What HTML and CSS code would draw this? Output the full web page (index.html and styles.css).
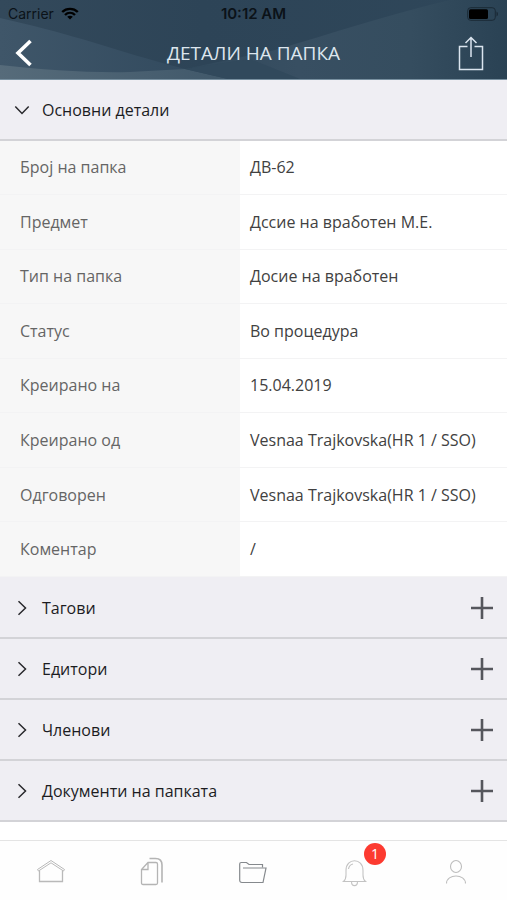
FILE: index.html
```html
<!DOCTYPE html>
<html lang="mk">
<head>
<meta charset="utf-8">
<meta name="viewport" content="width=device-width, initial-scale=1">
<title>Детали на папка</title>
<link rel="stylesheet" href="styles.css">
</head>
<body>
<header class="top">
  <svg class="top-art" viewBox="0 0 507 79" preserveAspectRatio="none" aria-hidden="true">
    <defs>
      <linearGradient id="sky" x1="0" y1="0" x2="1" y2="0"><stop offset="0" stop-color="#33495b"/><stop offset="0.4" stop-color="#2d4457"/><stop offset="1" stop-color="#2f475a"/></linearGradient>
      <linearGradient id="left" x1="0" y1="0" x2="1" y2="0"><stop offset="0" stop-color="#3f5669"/><stop offset="1" stop-color="#334b5f"/></linearGradient>
      <linearGradient id="right" x1="0" y1="0" x2="1" y2="0"><stop offset="0" stop-color="#30485b"/><stop offset="0.350" stop-color="#384f62"/><stop offset="0.700" stop-color="#354d5f"/><stop offset="1" stop-color="#2a4254"/></linearGradient>
      <linearGradient id="low" x1="0" y1="0" x2="1" y2="0"><stop offset="0" stop-color="#566b7a"/><stop offset="1" stop-color="#40586a"/></linearGradient>
    </defs>
    <rect width="507" height="79" fill="url(#sky)"/>
    <path d="M507 0H450C390 14 330 34 275 50L185 69L228 79H507Z" fill="url(#right)"/>
    <path d="M0 18L34 26C90 40 130 55 185 69L150 79H0Z" fill="url(#left)"/>
    <path d="M0 65C45 70 90 73 130 72L185 69L228 79H0Z" fill="url(#low)"/>
    <path d="M185 69L250 59L300 79H228Z" fill="#31495c"/>
  </svg>
  <div class="status">
    <span class="carrier">Carrier
      <svg width="18" height="13" viewBox="0 0 18 13" aria-hidden="true"><g fill="none" stroke="#000" stroke-width="2.4"><path d="M1.2 5C5.600 .8 12.400 .8 16.800 5"/><path d="M4 8C6.900 5.200 11.100 5.200 14 8"/></g><path d="M9 12.600L6.200 9.800C7.800 8.300 10.200 8.300 11.800 9.800Z"/></svg>
    </span>
    <span class="clock">10:12 AM</span>
    <svg class="battery" width="32" height="14" viewBox="0 0 32 14" aria-hidden="true"><rect x=".7" y=".7" width="27.600" height="12.600" rx="3" fill="none" stroke="#1b2a36"/><rect x="2" y="2.300" width="19" height="9.600" rx="1.500"/><path d="M29.500 4.500C31.500 5.500 31.500 8.500 29.500 9.500Z" fill="#1b2a36"/></svg>
  </div>
  <div class="nav">
    <button class="icon-btn" aria-label="Назад"><svg width="18" height="28" viewBox="0 0 18 28"><path d="M15.500 2L3 14L15.500 26" fill="none" stroke="#fff" stroke-width="3.600"/></svg></button>
    <h1>ДЕТАЛИ НА ПАПКА</h1>
    <button class="icon-btn share" aria-label="Сподели"><svg width="26" height="36" viewBox="0 0 26 36"><path d="M9.500 11.500H1.500V34.500H24.500V11.500H16.500M13 22V2.500M7.500 8L13 2.500L18.500 8" fill="none" stroke="#dbe5ef" stroke-width="1.500"/></svg></button>
  </div>
</header>

<main>
  <section>
    <h2 class="bar"><button class="toggle" aria-expanded="true"><svg width="16" height="16" viewBox="0 0 16 16"><path d="M1.300 4.500L8 11.500L14.700 4.500" fill="none" stroke="#28282c" stroke-width="1.500"/></svg>Основни детали</button></h2>
    <table class="details">
      <tbody>
        <tr><th scope="row">Број на папка</th><td>ДВ-62</td></tr>
        <tr><th scope="row">Предмет</th><td>Дссие на вработен М.Е.</td></tr>
        <tr><th scope="row">Тип на папка</th><td>Досие на вработен</td></tr>
        <tr><th scope="row">Статус</th><td>Во процедура</td></tr>
        <tr><th scope="row">Креирано на</th><td>15.04.2019</td></tr>
        <tr><th scope="row">Креирано од</th><td>Vesnaa Trajkovska(HR 1 / SSO)</td></tr>
        <tr><th scope="row">Одговорен</th><td>Vesnaa Trajkovska(HR 1 / SSO)</td></tr>
        <tr><th scope="row">Коментар</th><td>/</td></tr>
      </tbody>
    </table>
  </section>
  <div class="more">
  <h2 class="bar"><button class="toggle" aria-expanded="false"><svg width="16" height="16" viewBox="0 0 16 16"><path d="M4.500 1.300L11.500 8L4.500 14.700" fill="none" stroke="#28282c" stroke-width="1.500"/></svg>Тагови</button><button class="add" aria-label="Додај тагови"><svg width="22" height="22" viewBox="0 0 22 22"><path d="M11 0V22M0 11H22" stroke="#55565c" stroke-width="2.600"/></svg></button></h2>
  <h2 class="bar"><button class="toggle" aria-expanded="false"><svg width="16" height="16" viewBox="0 0 16 16"><path d="M4.500 1.300L11.500 8L4.500 14.700" fill="none" stroke="#28282c" stroke-width="1.500"/></svg>Едитори</button><button class="add" aria-label="Додај едитори"><svg width="22" height="22" viewBox="0 0 22 22"><path d="M11 0V22M0 11H22" stroke="#55565c" stroke-width="2.600"/></svg></button></h2>
  <h2 class="bar"><button class="toggle" aria-expanded="false"><svg width="16" height="16" viewBox="0 0 16 16"><path d="M4.500 1.300L11.500 8L4.500 14.700" fill="none" stroke="#28282c" stroke-width="1.500"/></svg>Членови</button><button class="add" aria-label="Додај членови"><svg width="22" height="22" viewBox="0 0 22 22"><path d="M11 0V22M0 11H22" stroke="#55565c" stroke-width="2.600"/></svg></button></h2>
  <h2 class="bar"><button class="toggle" aria-expanded="false"><svg width="16" height="16" viewBox="0 0 16 16"><path d="M4.500 1.300L11.500 8L4.500 14.700" fill="none" stroke="#28282c" stroke-width="1.500"/></svg>Документи на папката</button><button class="add" aria-label="Додај документи"><svg width="22" height="22" viewBox="0 0 22 22"><path d="M11 0V22M0 11H22" stroke="#55565c" stroke-width="2.600"/></svg></button></h2>
  </div>
</main>

<nav class="tabs">
  <a href="#home" aria-label="Почетна"><svg width="30" height="30" viewBox="0 0 30 30"><g fill="none" stroke="#b9b9b9"><path d="M1.500 12.500L15 3.500L28.500 12.500L27.500 14L15 5.800L2.500 14Z"/><path d="M3.500 13.500V24.500H26.500V13.500" stroke-width="1.300"/></g></svg></a>
  <a href="#documents" aria-label="Документи"><svg width="30" height="30" viewBox="0 0 30 30"><g fill="none" stroke="#b4b4b4" stroke-width="1.300"><path d="M11 5.500H19Q20.500 5.500 20.500 7V26Q20.500 27.500 19 27.500H6Q4.500 27.500 4.500 26V12.500ZM11 5.500V12.500H4.500"/><path d="M12.500 1.500H18.500Q25 1.500 25 8V25.500" stroke-width="1.600"/></g></svg></a>
  <a href="#folders" aria-label="Папки" aria-current="page"><svg width="30" height="30" viewBox="0 0 30 30"><g fill="none" stroke="#85898d" stroke-width="1.200"><path d="M4 25.500Q1.700 25.500 1.700 23V7Q1.700 5.500 3.200 5.500H8.500L11 7.500H24.500V10.500"/><path d="M5 11H28L25 25.500H4"/></g></svg></a>
  <a href="#alerts" aria-label="Известувања"><span class="bell"><svg width="30" height="30" viewBox="0 0 30 30"><g fill="none" stroke="#c3c3c3" stroke-width="1.100"><path d="M3.500 24.500Q6 22.500 6 18V13.500C6 .5 23 .5 23 13.500V18Q23 22.500 25.500 24.500Z"/><path d="M11.500 24.500C11.500 30 17.500 30 17.500 24.500M8.500 12Q9 8 13 7"/></g></svg><span class="badge">1</span></span></a>
  <a href="#profile" aria-label="Профил"><svg width="30" height="30" viewBox="0 0 30 30"><g fill="none" stroke="#bdbdbd" stroke-width="1.100"><ellipse cx="15" cy="9.500" rx="5.500" ry="6"/><path d="M5.500 26.500C5.500 16.500 24.500 16.500 24.500 26.500"/></g></svg></a>
</nav>
</body>
</html>
```
FILE: styles.css
```css
* { box-sizing: border-box; }

body {
  margin: 0;
  min-height: 100vh;
  display: flex;
  flex-direction: column;
  background: #fff;
  color: #414141;
  font: 16px/24px "Open Sans", "Noto Sans", sans-serif;
}

button {
  border: 0;
  padding: 0;
  background: none;
  color: inherit;
  font: inherit;
  cursor: pointer;
}

svg { display: block; flex: none; }

.top {
  position: relative;
  isolation: isolate;
  border-bottom: 1px solid #7890a0;
}

.top-art {
  position: absolute;
  inset: 0;
  width: 100%;
  height: 100%;
  z-index: -1;
}

.status {
  display: grid;
  grid-template-columns: 1fr auto 1fr;
  align-items: center;
  height: 27px;
  padding: 0 8px;
  color: #0b1218;
  font: 14px/20px Inter, "Liberation Sans", sans-serif;
}

.carrier { display: flex; align-items: center; gap: 7px; }
.clock { font-size: 15px; font-weight: 600; }
.battery { justify-self: end; }

.nav {
  display: grid;
  grid-template-columns: 1fr auto 1fr;
  align-items: center;
  height: 52px;
  padding: 0 15px;
}

.icon-btn { display: flex; }
.share { justify-self: end; padding-right: 8px; }

h1 {
  margin: 0;
  color: #dde6ee;
  font-size: 19px;
  font-weight: 400;
}

main { flex: 1; }

.bar {
  display: flex;
  align-items: center;
  justify-content: space-between;
  height: 61px;
  margin: 0;
  padding: 0 14px;
  border-bottom: 2px solid #d3d3d7;
  background: #efeef3;
  color: #1c1c1f;
  font-size: 16px;
  font-weight: 400;
}

.toggle {
  display: flex;
  flex: 1;
  align-items: center;
  gap: 12px;
  align-self: stretch;
  text-align: left;
}

.details {
  width: 100%;
  height: 436px;
  border-collapse: collapse;
  table-layout: fixed;
}

.details th,
.details td {
  padding: 0 10px;
  border-bottom: 1px solid #f3f3f4;
  text-align: left;
  font-weight: 400;
}

.details th {
  width: 240px;
  padding-left: 20px;
  background: #f7f7f7;
  color: #656565;
}

.more {
  padding-top: 1px;
  background: #efeef3;
}

.tabs {
  position: sticky;
  bottom: 0;
  display: grid;
  grid-template-columns: repeat(5, 1fr);
  height: 60px;
  border-top: 1px solid #e4e4e4;
  background: #fefefe;
}

.tabs a {
  display: flex;
  align-items: center;
  justify-content: center;
  padding-top: 3px;
}

.bell { position: relative; }

.badge {
  position: absolute;
  top: -14px;
  right: -16px;
  width: 22px;
  height: 22px;
  border-radius: 50%;
  background: #fc3a30;
  color: #fff;
  font-size: 14px;
  line-height: 22px;
  text-align: center;
}
```
